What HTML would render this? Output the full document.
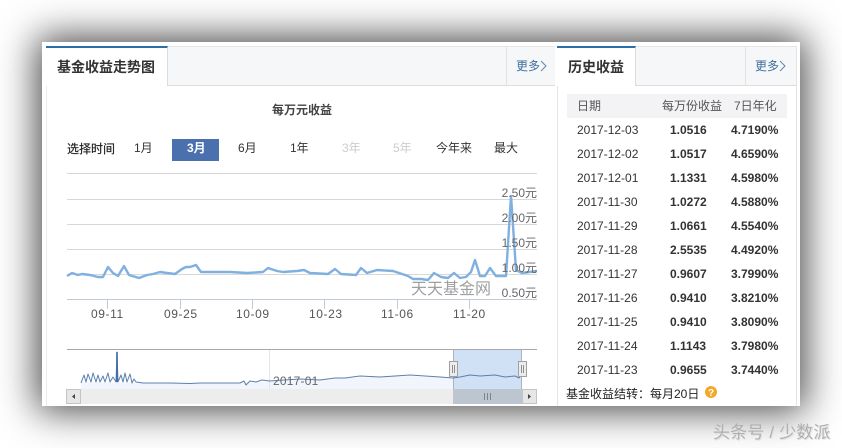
<!DOCTYPE html>
<html lang="zh">
<head>
<meta charset="utf-8">
<style>
*{box-sizing:border-box;}
html,body{margin:0;padding:0;background:#fff;}
body{width:842px;height:448px;position:relative;overflow:hidden;font-family:"Liberation Sans","Noto Sans CJK SC",sans-serif;color:#333;font-size:12px;}
#wrap{position:absolute;left:0;top:0;width:842px;height:448px;filter:blur(.3px);}
.abs{position:absolute;}
.t{position:absolute;white-space:nowrap;line-height:16px;}
#panel{left:42px;top:42px;width:758px;height:364px;background:#fff;box-shadow:0 0 36px 5px rgba(0,0,0,.72);overflow:hidden;}
.bar{position:absolute;background:#f6f7f9;border-bottom:1px solid #dcdcdc;}
.tab{position:absolute;background:#fff;border-top:2px solid #2b6fa6;border-right:1px solid #dcdcdc;}
.m{color:#3f6f9f;}
</style>
</head>
<body>
<div id="wrap">
<div class="abs" id="panel"></div>

<!-- left panel frame -->
<div class="abs" style="left:46px;top:46px;width:509px;height:360px;border-left:1px solid #ebebeb;"></div>
<div class="bar" style="left:46px;top:46px;width:509px;height:40px;border-top:1px solid #e6e6e6;"></div>
<div class="tab" style="left:46px;top:46px;width:122px;height:40px;"></div>
<div class="abs" style="left:506px;top:47px;width:1px;height:38px;background:#e2e2e2;"></div>
<div class="t" style="left:57px;top:58px;font-size:14px;font-weight:bold;line-height:18px;color:#333;">基金收益走势图</div>
<div class="t m" style="left:516px;top:58px;">更多</div>

<div class="t" style="left:272px;top:102px;font-weight:bold;color:#444;">每万元收益</div>

<div class="t" style="left:67px;top:141px;color:#222;-webkit-text-stroke:.2px #222;">选择时间</div>
<div class="t" style="left:134px;top:140px;">1月</div>
<div class="abs" style="left:172px;top:139px;width:47px;height:22px;background:#4a70ae;"></div>
<div class="t" style="left:187px;top:140px;color:#fff;font-weight:bold;">3月</div>
<div class="t" style="left:238px;top:140px;">6月</div>
<div class="t" style="left:290px;top:140px;">1年</div>
<div class="t" style="left:342px;top:140px;color:#ccc;">3年</div>
<div class="t" style="left:393px;top:140px;color:#ccc;">5年</div>
<div class="t" style="left:436px;top:140px;">今年来</div>
<div class="t" style="left:494px;top:140px;">最大</div>

<!-- right panel -->
<div class="abs" style="left:557px;top:46px;width:240px;height:360px;background:#fff;border-left:1px solid #e4e4e4;border-right:1px solid #e4e4e4;"></div>
<div class="bar" style="left:557px;top:46px;width:240px;height:40px;border-top:1px solid #e6e6e6;border-right:1px solid #e4e4e4;"></div>
<div class="tab" style="left:557px;top:46px;width:79px;height:40px;"></div>
<div class="abs" style="left:745px;top:47px;width:1px;height:38px;background:#e2e2e2;"></div>
<div class="t" style="left:568px;top:58px;font-size:14px;font-weight:bold;line-height:18px;color:#333;">历史收益</div>
<div class="t m" style="left:755px;top:58px;">更多</div>

<!-- chart -->
<svg class="abs" style="left:0;top:0;" width="842" height="448" viewBox="0 0 842 448">
  <g fill="none" stroke="#5f87ad" stroke-width="1">
    <polyline points="541,61 546,66 541,71"/>
    <polyline points="780,61 785,66 780,71"/>
  </g>
  <g stroke="#d8d8d8" stroke-width="1" shape-rendering="crispEdges">
    <line x1="67" x2="537" y1="173.5" y2="173.5"/>
    <line x1="67" x2="537" y1="199.5" y2="199.5"/>
    <line x1="67" x2="537" y1="224.5" y2="224.5"/>
    <line x1="67" x2="537" y1="249.5" y2="249.5"/>
    <line x1="67" x2="537" y1="274.5" y2="274.5"/>
  </g>
  <g stroke="#c0cad6" stroke-width="1" shape-rendering="crispEdges">
    <line x1="67" x2="537" y1="299.5" y2="299.5"/>
    <line x1="107.5" x2="107.5" y1="300" y2="309"/>
    <line x1="180.5" x2="180.5" y1="300" y2="309"/>
    <line x1="252.5" x2="252.5" y1="300" y2="309"/>
    <line x1="324.5" x2="324.5" y1="300" y2="309"/>
    <line x1="397.5" x2="397.5" y1="300" y2="309"/>
    <line x1="469.5" x2="469.5" y1="300" y2="309"/>
  </g>
  <polyline fill="none" stroke="#7fb0e0" stroke-width="2.4" stroke-linejoin="round" points="67,276 72,273 78,275 82,274 90,275 98,277 103,277 108,267 113,273 118,276 124,266 129,275 139,278 147,275 153,274 160,272 167,273 175,274 182,269 186,267 190,267 196,265 201,272 230,272 247,273 263,272 268,268 277,271 283,272 297,271 304,270 310,273 328,274 335,269 341,274 356,275 361,268 367,273 377,270 393,271 408,276 413,279 421,279 428,280 434,273 441,277 448,278 454,273 460,278 466,277 471,272 475,260 480,276 485,276 490,268 496,276 506,276 511,196 516,270 522,273 537,271"/>
  <g font-family="'Liberation Sans','Noto Sans CJK SC',sans-serif" font-size="12" fill="#555" letter-spacing=".6">
    <text x="91" y="318">09-11</text>
    <text x="164" y="318">09-25</text>
    <text x="236" y="318">10-09</text>
    <text x="309" y="318">10-23</text>
    <text x="381" y="318">11-06</text>
    <text x="453" y="318">11-20</text>
  </g>
  <g font-family="'Liberation Sans','Noto Sans CJK SC',sans-serif" font-size="12" fill="#666" text-anchor="end">
    <text x="537" y="197">2.50元</text>
    <text x="537" y="222">2.00元</text>
    <text x="537" y="247">1.50元</text>
    <text x="537" y="272">1.00元</text>
    <text x="537" y="297">0.50元</text>
  </g>
  <text x="411" y="294" font-family="'Liberation Sans','Noto Sans CJK SC',sans-serif" font-size="16" fill="#a0a0a0">天天基金网</text>

  <!-- navigator -->
  <polygon fill="#f2f6fc" points="81,389 81,382 143,383 240,383 300,380 400,376 453,378 453,389"/>
  <line x1="67" x2="537" y1="349.5" y2="349.5" stroke="#a8a8a8" shape-rendering="crispEdges"/>
  <line x1="269.5" x2="269.5" y1="350" y2="389" stroke="#e4e4e4" shape-rendering="crispEdges"/>
  <rect x="453" y="350" width="69" height="39" fill="#d0e1f6"/>
  <line x1="453.5" x2="453.5" y1="350" y2="389" stroke="#a9b4c2"/>
  <line x1="521.5" x2="521.5" y1="350" y2="389" stroke="#a9b4c2"/>
  <polyline fill="none" stroke="#5b80ad" stroke-width="1" stroke-linejoin="round" points="81,383 84,375 86,382 88,374 91,382 93,373 96,382 98,375 100,382 103,376 105,382 108,373 110,382 113,377 116,382 117,352 118,382 121,375 123,382 125,373 127,382 130,374 132,383 134,379 136,382 143,383 170,383 190,383.5 200,383 215,383 240,383 244,381 246,385 250,381 256,382 262,380 269,381 300,379 320,380 335,378 345,378 360,376 380,377 395,376 410,375 425,376 440,377 453,378 460,377 470,375 480,376 495,375 505,377 515,376 519,378 522,374"/>
  <line x1="117" x2="117" y1="352" y2="382" stroke="#3f6aa3" stroke-width="1.6"/>
  <text x="273" y="385" font-family="'Liberation Sans','Noto Sans CJK SC',sans-serif" font-size="12" fill="#666" letter-spacing=".2">2017-01</text>

  <!-- scrollbar -->
  <rect x="81" y="389" width="372" height="15" fill="#ededee"/>
  <rect x="453" y="389" width="69" height="15" fill="#bcc5d0"/>
  <rect x="66.5" y="389.5" width="14" height="14" fill="#e6e6e6" stroke="#c4c4c4"/>
  <polygon points="75,394 72,396.5 75,399" fill="#444"/>
  <rect x="522.5" y="389.5" width="14" height="14" fill="#e6e6e6" stroke="#c4c4c4"/>
  <polygon points="528,394 531,396.5 528,399" fill="#444"/>
  <g stroke="#7b8590" stroke-width="1.4" shape-rendering="crispEdges">
    <line x1="484.5" x2="484.5" y1="393" y2="400"/>
    <line x1="487.5" x2="487.5" y1="393" y2="400"/>
    <line x1="490.5" x2="490.5" y1="393" y2="400"/>
  </g>
  <!-- handles -->
  <g fill="#ececec" stroke="#a0a0a0">
    <rect x="449.5" y="361.5" width="8" height="15"/>
    <rect x="518.5" y="361.5" width="8" height="15"/>
  </g>
  <g stroke="#909090" shape-rendering="crispEdges">
    <line x1="452.5" x2="452.5" y1="365" y2="373"/>
    <line x1="454.5" x2="454.5" y1="365" y2="373"/>
    <line x1="521.5" x2="521.5" y1="365" y2="373"/>
    <line x1="523.5" x2="523.5" y1="365" y2="373"/>
  </g>
  <!-- help icon -->
  <circle cx="711" cy="392" r="6" fill="#f2a92a"/>
  <text x="711" y="396" font-family="'Liberation Sans',sans-serif" font-size="10" font-weight="bold" fill="#fff" text-anchor="middle">?</text>
</svg>

<div class="abs" style="left:567px;top:94px;width:220px;height:24px;background:#f3f3f5;"></div>
<div class="t" style="left:577px;top:98px;color:#555;">日期</div>
<div class="t" style="left:662px;top:98px;color:#555;">每万份收益</div>
<div class="t" style="left:734px;top:98px;color:#555;">7日年化</div>

<div class="t" style="left:577px;top:122px;">2017-12-03</div><div class="t" style="left:670px;top:122px;font-weight:bold;">1.0516</div><div class="t" style="left:731px;top:122px;font-weight:bold;">4.7190%</div>
<div class="t" style="left:577px;top:146px;">2017-12-02</div><div class="t" style="left:670px;top:146px;font-weight:bold;">1.0517</div><div class="t" style="left:731px;top:146px;font-weight:bold;">4.6590%</div>
<div class="t" style="left:577px;top:170px;">2017-12-01</div><div class="t" style="left:670px;top:170px;font-weight:bold;">1.1331</div><div class="t" style="left:731px;top:170px;font-weight:bold;">4.5980%</div>
<div class="t" style="left:577px;top:194px;">2017-11-30</div><div class="t" style="left:670px;top:194px;font-weight:bold;">1.0272</div><div class="t" style="left:731px;top:194px;font-weight:bold;">4.5880%</div>
<div class="t" style="left:577px;top:218px;">2017-11-29</div><div class="t" style="left:670px;top:218px;font-weight:bold;">1.0661</div><div class="t" style="left:731px;top:218px;font-weight:bold;">4.5540%</div>
<div class="t" style="left:577px;top:242px;">2017-11-28</div><div class="t" style="left:670px;top:242px;font-weight:bold;">2.5535</div><div class="t" style="left:731px;top:242px;font-weight:bold;">4.4920%</div>
<div class="t" style="left:577px;top:266px;">2017-11-27</div><div class="t" style="left:670px;top:266px;font-weight:bold;">0.9607</div><div class="t" style="left:731px;top:266px;font-weight:bold;">3.7990%</div>
<div class="t" style="left:577px;top:290px;">2017-11-26</div><div class="t" style="left:670px;top:290px;font-weight:bold;">0.9410</div><div class="t" style="left:731px;top:290px;font-weight:bold;">3.8210%</div>
<div class="t" style="left:577px;top:314px;">2017-11-25</div><div class="t" style="left:670px;top:314px;font-weight:bold;">0.9410</div><div class="t" style="left:731px;top:314px;font-weight:bold;">3.8090%</div>
<div class="t" style="left:577px;top:338px;">2017-11-24</div><div class="t" style="left:670px;top:338px;font-weight:bold;">1.1143</div><div class="t" style="left:731px;top:338px;font-weight:bold;">3.7980%</div>
<div class="t" style="left:577px;top:362px;">2017-11-23</div><div class="t" style="left:670px;top:362px;font-weight:bold;">0.9655</div><div class="t" style="left:731px;top:362px;font-weight:bold;">3.7440%</div>

<div class="t" style="left:566px;top:386px;color:#222;">基金收益结转：每月20日</div>

<div class="t" style="left:713px;top:423px;font-size:17px;letter-spacing:.15px;line-height:20px;color:#b0b0b0;text-shadow:1px 1px 1px #ddd;">头条号 / 少数派</div>
</div>
</body>
</html>
